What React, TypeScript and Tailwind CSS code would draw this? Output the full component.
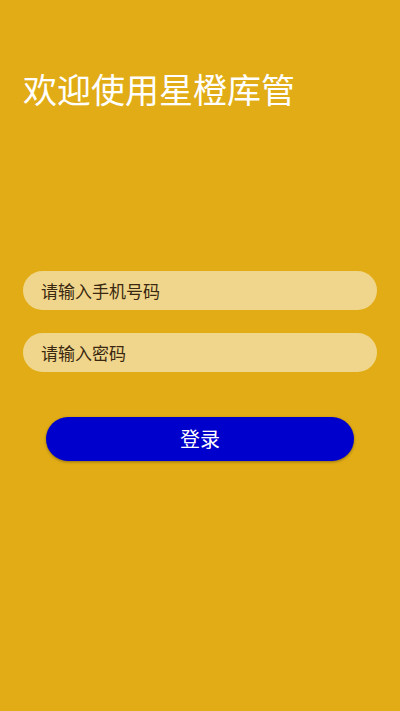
export default function App() {
  return (
    <div
      className="min-h-[711px] w-full bg-[#e1ac15] px-[23px]"
      style={{ fontFamily: '"Noto Sans CJK SC", "Noto Sans", sans-serif' }}
    >
      <h1 className="pt-[65px] text-[34px] leading-[48px] font-normal text-white">
        欢迎使用星橙库管
      </h1>

      <div className="mt-[158px] flex flex-col gap-[23px]">
        <input
          type="tel"
          placeholder="请输入手机号码"
          className="h-[39px] w-full rounded-full bg-[#f0d68c] px-[18px] text-[17px] text-[#3a2810] placeholder:text-[#3a2810] focus:outline-none"
        />
        <input
          type="password"
          placeholder="请输入密码"
          className="h-[39px] w-full rounded-full bg-[#f0d68c] px-[18px] text-[17px] text-[#3a2810] placeholder:text-[#3a2810] focus:outline-none"
        />
      </div>

      <div className="mt-[45px] px-[23px]">
        <button
          type="button"
          className="h-[44px] w-full rounded-full bg-[#0000cc] text-[20px] text-white shadow-[0_1px_3px_rgba(0,0,0,0.35)]"
        >
          登录
        </button>
      </div>
    </div>
  );
}
